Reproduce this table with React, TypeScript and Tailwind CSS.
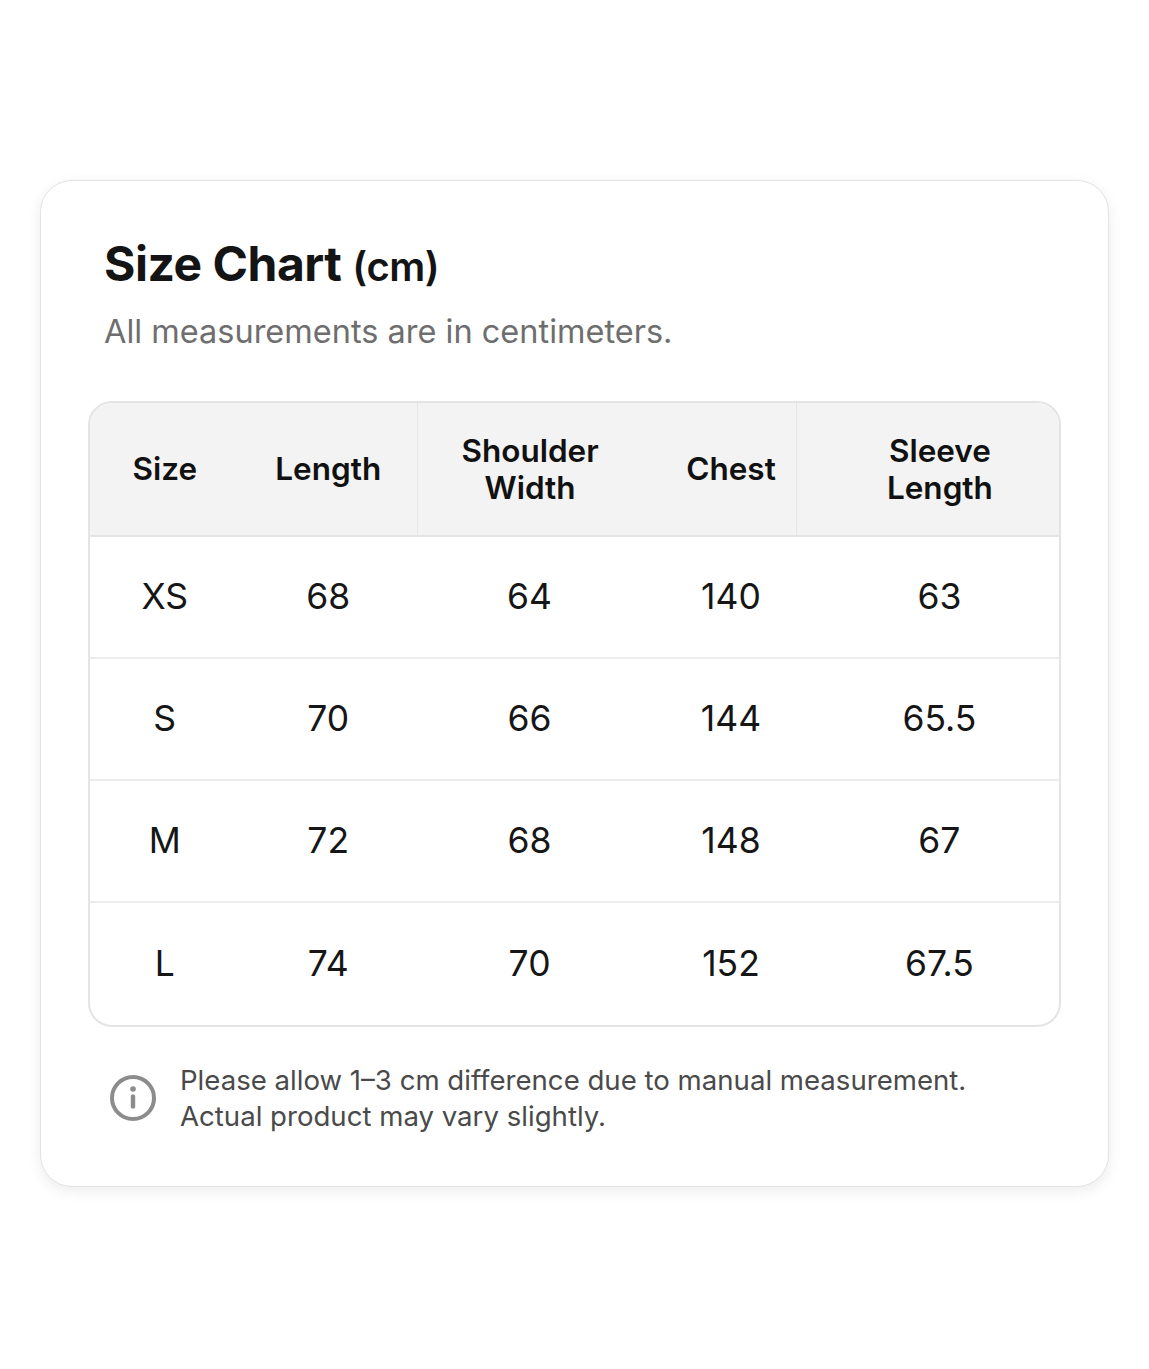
const rows = [
  ["XS", "68", "64", "140", "63"],
  ["S", "70", "66", "144", "65.5"],
  ["M", "72", "68", "148", "67"],
  ["L", "74", "70", "152", "67.5"],
];

const cols = ["w-[150px]", "w-[178px]", "w-[226px]", "w-[154px] pl-6", "w-[264px] pl-6"];

export default function App() {
  return (
    <div className="min-h-screen bg-white pt-[180px]" style={{ fontFamily: "Inter, 'Noto Sans', sans-serif" }}>
      <div className="mx-[40px] rounded-[32px] border border-[#e3e3e3] bg-white px-[47px] pt-[54px] pb-[52px] shadow-[0_4px_14px_rgba(0,0,0,0.08)]">
        {/* Header */}
        <div className="pl-[16px]">
          <h1 className="text-[48px] font-bold leading-[1.2] tracking-[-0.01em] text-[#141414]">
            Size Chart <span className="text-[40px] font-semibold">(cm)</span>
          </h1>
          <p className="mt-[18px] text-[32.5px] leading-[1.3] text-[#6e6e6e]">All measurements are in centimeters.</p>
        </div>

        {/* Table */}
        <div className="mt-[48px] overflow-hidden rounded-[24px] border-2 border-[#e4e4e4]">
          <div className="flex h-[134px] items-stretch border-b-2 border-[#e4e4e4] bg-[#f3f3f3] text-[31.5px] font-semibold leading-[37px] text-[#111]">
            <div className={`${cols[0]} flex items-center justify-center text-center`}>Size</div>
            <div className={`${cols[1]} flex items-center justify-center text-center`}>Length</div>
            <div className={`${cols[2]} flex items-center justify-center border-l border-[#e6e6e6] text-center`}>
              Shoulder
              <br />
              Width
            </div>
            <div className={`${cols[3]} flex items-center justify-center text-center`}>Chest</div>
            <div className={`${cols[4]} flex items-center justify-center border-l border-[#e6e6e6] text-center`}>
              Sleeve
              <br />
              Length
            </div>
          </div>
          {rows.map((r, i) => (
            <div
              key={r[0]}
              className={`flex h-[122px] items-center text-[35.5px] text-[#161616] ${i < rows.length - 1 ? "border-b-2 border-[#ececec]" : ""}`}
            >
              {r.map((v, j) => (
                <div key={j} className={`${cols[j]} text-center`}>
                  {v}
                </div>
              ))}
            </div>
          ))}
        </div>

        {/* Note */}
        <div className="mt-[35px] flex items-center gap-[23px] pl-[21px]">
          <svg width="48" height="48" viewBox="0 0 48 48" fill="none" className="shrink-0">
            <circle cx="24" cy="24" r="21" stroke="#8c8c8c" strokeWidth="4" />
            <circle cx="24" cy="15" r="2.8" fill="#8c8c8c" />
            <rect x="21.8" y="20.5" width="4.4" height="14" rx="1.5" fill="#8c8c8c" />
          </svg>
          <p className="text-[27.6px] leading-[36px] text-[#4a4a4a]">
            Please allow 1–3 cm difference due to manual measurement.
            <br />
            Actual product may vary slightly.
          </p>
        </div>
      </div>
    </div>
  );
}
